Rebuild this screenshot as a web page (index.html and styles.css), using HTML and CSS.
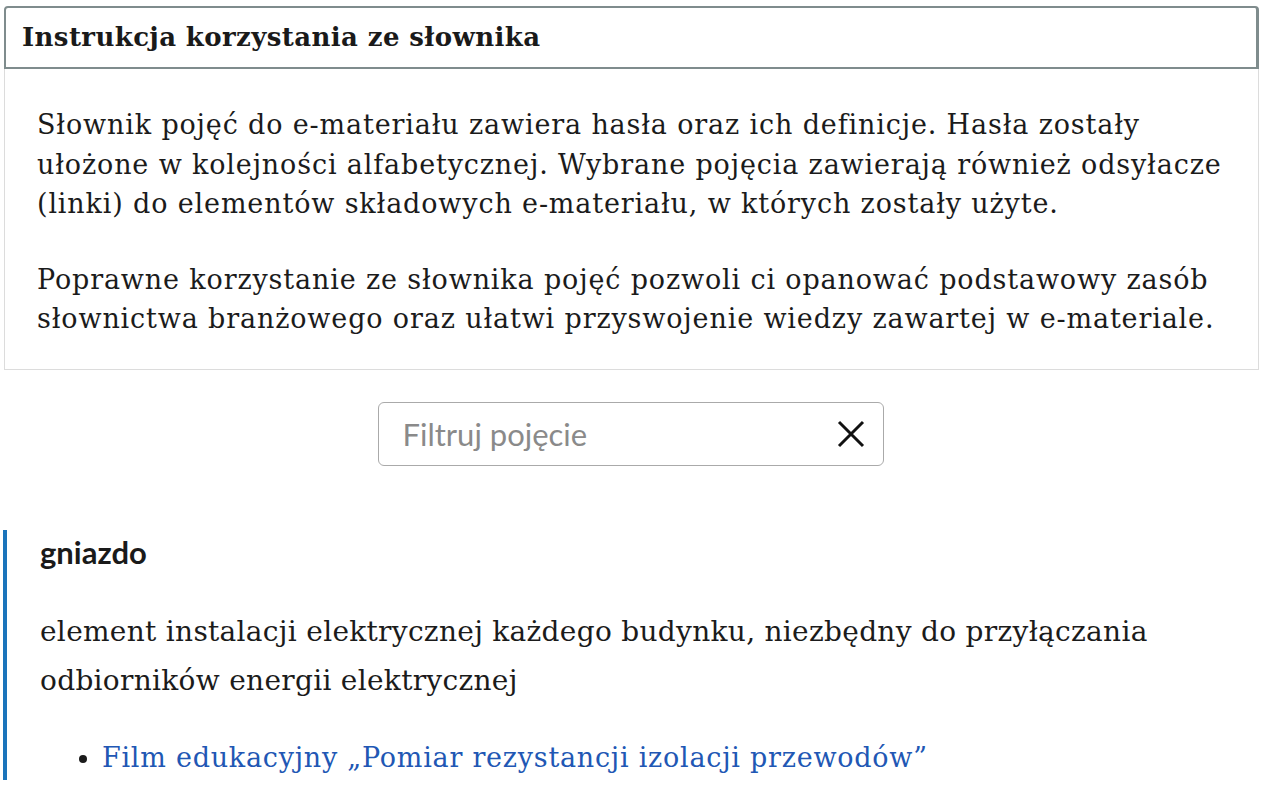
FILE: index.html
```html
<!DOCTYPE html>
<html lang="pl">
<head>
<meta charset="utf-8">
<title>Słownik pojęć</title>
<link rel="stylesheet" href="styles.css">
</head>
<body>
<section class="instr">
  <h2 class="instr-head">Instrukcja korzystania ze słownika</h2>
  <div class="instr-body">
    <p class="instr-p">Słownik pojęć do e-materiału zawiera hasła oraz ich definicje. Hasła zostały ułożone w kolejności alfabetycznej. Wybrane pojęcia zawierają również odsyłacze (linki) do elementów składowych e-materiału, w których zostały użyte.</p>
    <p class="instr-p">Poprawne korzystanie ze słownika pojęć pozwoli ci opanować podstawowy zasób słownictwa branżowego oraz ułatwi przyswojenie wiedzy zawartej w e-materiale.</p>
  </div>
</section>

<div class="filter-row">
  <div class="filter">
    <input class="filter-input" type="text" placeholder="Filtruj pojęcie">
    <button class="filter-clear" type="button" aria-label="Wyczyść">
      <svg width="28" height="28" viewBox="0 0 28 28"><path d="M2 2 L26 26 M26 2 L2 26" stroke="#111" stroke-width="3" fill="none"/></svg>
    </button>
  </div>
</div>

<article class="entry">
  <h3 class="term">gniazdo</h3>
  <p class="def">element instalacji elektrycznej każdego budynku, niezbędny do przyłączania odbiorników energii elektrycznej</p>
  <ul class="refs">
    <li><a class="ref-link" href="#">Film edukacyjny „Pomiar rezystancji izolacji przewodów”</a></li>
  </ul>
</article>
</body>
</html>
```

FILE: styles.css
```css
html, body {
  margin: 0;
  padding: 0;
  background: #fff;
}
body {
  padding: 6px 3px 0 4px;
  color: #1b1b1b;
  font-family: "DejaVu Serif", serif;
  overflow: hidden;
}
.instr {
  width: 1255px;
}
.instr-head {
  margin: 0;
  height: 63px;
  box-sizing: border-box;
  border: 2px solid #7f8c8d;
  border-right-width: 3px;
  border-radius: 4px 4px 0 0;
  padding: 0 0 1px 16px;
  display: flex;
  align-items: center;
  font-family: "DejaVu Serif", serif;
  font-weight: bold;
  font-size: 26px;
  letter-spacing: 0.4px;
  color: #1a1a1a;
}
.instr-body {
  border: 1px solid #dcdcdc;
  border-top: none;
  padding: 36px 20px 30px 32px;
}
.instr-p {
  margin: 0;
  font-size: 27px;
  letter-spacing: 0.85px;
  line-height: 39.5px;
}
.instr-p + .instr-p {
  margin-top: 36px;
}
.filter-row {
  display: flex;
  justify-content: center;
  margin-top: 32px;
}
.filter {
  width: 506px;
  height: 64px;
  box-sizing: border-box;
  border: 1px solid #aaa;
  border-radius: 6px;
  display: flex;
  align-items: center;
  padding: 0 18px 0 24px;
  margin-left: -2px;
}
.filter-input {
  flex: 1;
  border: none;
  outline: none;
  background: transparent;
  padding: 0;
  font-family: Lato, sans-serif;
  font-size: 31px;
  color: #222;
}
.filter-input::placeholder {
  color: #8a8a8a;
}
.filter-clear {
  border: none;
  background: none;
  padding: 0;
  width: 28px;
  height: 28px;
  display: flex;
}
.entry {
  margin: 64px 0 0 -1px;
  border-left: 4px solid #1b74bb;
  padding: 3px 0 2px 33px;
}
.term {
  margin: 0;
  font-family: Lato, sans-serif;
  font-weight: bold;
  font-size: 31px;
  line-height: 38px;
  color: #1a1a1a;
}
.def {
  margin: 36px 0 0;
  font-size: 28px;
  letter-spacing: 0.3px;
  line-height: 49px;
}
.refs {
  margin: 33px 0 0;
  padding-left: 62px;
  font-size: 27px;
  letter-spacing: 0.75px;
  line-height: 40px;
}
.ref-link {
  color: #2157b4;
  text-decoration: none;
}
```
